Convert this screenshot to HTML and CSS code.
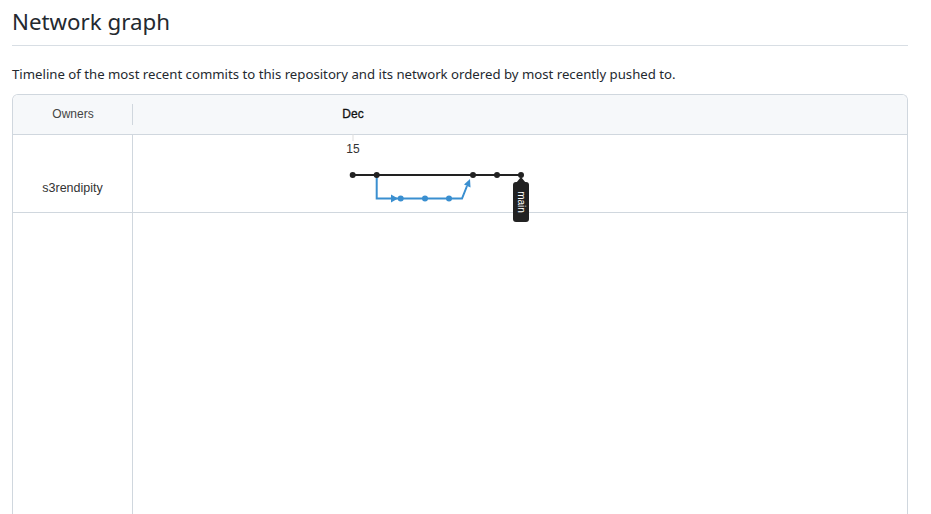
FILE: index.html
```html
<!DOCTYPE html>
<html>
<head>
<meta charset="utf-8">
<link rel="stylesheet" href="styles.css">
</head>
<body>
<div class="page">
  <h1 class="title">Network graph</h1>
  <p class="desc">Timeline of the most recent commits to this repository and its network ordered by most recently pushed to.</p>
  <div class="network">
    <div class="owners">
      <div class="owners-head"><span class="owners-label">Owners</span></div>
      <div class="owner-row">s3rendipity</div>
      <div class="owner-rest"></div>
    </div>
    <div class="graph">
      <div class="graph-head"></div>
      <div class="graph-row"></div>
      <svg class="graph-svg" width="774" height="420" viewBox="0 0 774 420" xmlns="http://www.w3.org/2000/svg">
        <line x1="220" y1="39" x2="220" y2="46" stroke="#ddd" stroke-width="1"/>
        <text x="220" y="23" text-anchor="middle" class="month">Dec</text>
        <text x="220" y="58" text-anchor="middle" class="day">15</text>
        <line x1="219.7" y1="80" x2="388" y2="80" stroke="#222" stroke-width="2"/>
        <path d="M243.7 80 V103.5 H260" fill="none" stroke="#3a8fd0" stroke-width="2"/>
        <path d="M258 99.5 L265 103.5 L258 107.5 Z" fill="#3a8fd0"/>
        <path d="M262 103.5 H329 L334 91" fill="none" stroke="#3a8fd0" stroke-width="2"/>
        <path d="M337 84 L337.5 92.5 L331 89.5 Z" fill="#3a8fd0"/>
        <circle cx="267.7" cy="103.5" r="3" fill="#3a8fd0"/>
        <circle cx="292" cy="103.5" r="3" fill="#3a8fd0"/>
        <circle cx="316" cy="103.5" r="3" fill="#3a8fd0"/>
        <circle cx="219.7" cy="80" r="3" fill="#222"/>
        <circle cx="243.7" cy="80" r="3" fill="#222"/>
        <circle cx="340" cy="80" r="3" fill="#222"/>
        <circle cx="364" cy="80" r="3" fill="#222"/>
        <circle cx="388" cy="80" r="3" fill="#222"/>
        <path d="M388 82 L393 88 L383 88 Z" fill="#222"/>
        <rect x="380" y="87" width="16" height="40" rx="3" fill="#222"/>
        <text x="0" y="0" class="branch" transform="translate(388 107) rotate(90)" text-anchor="middle">main</text>
      </svg>
    </div>
  </div>
</div>
</body>
</html>
```

FILE: styles.css
```css
* { box-sizing: border-box; }
html, body { margin: 0; padding: 0; background: #fff; }
body {
  font-family: "Noto Sans", "Open Sans", sans-serif;
  color: #24292f;
}
.page {
  padding: 0 23px 0 12px;
  height: 514px;
  overflow: hidden;
  display: flex;
  flex-direction: column;
}
.title {
  margin: 0;
  padding: 6px 0 7px;
  font-size: 22.3px;
  font-weight: 400;
  line-height: 32px;
  border-bottom: 1px solid #d8dee4;
}
.desc {
  margin: 18px 0 0;
  font-size: 13.2px;
  line-height: 20px;
}
.network {
  margin-top: 10px;
  flex: 1;
  display: grid;
  grid-template-columns: 120px 1fr;
  border: 1px solid #d0d7de;
  border-bottom: none;
  border-radius: 6px 6px 0 0;
  overflow: hidden;
  font-family: "Liberation Sans", Arial, sans-serif;
  font-size: 12px;
  color: #333;
}
.owners { display: flex; flex-direction: column; }
.owners-head {
  height: 40px;
  background: #f6f8fa;
  border-bottom: 1px solid #d0d7de;
  display: flex;
  align-items: center;
  justify-content: center;
  position: relative;
}
.owners-head::after {
  content: "";
  position: absolute;
  right: 0;
  top: 9px;
  height: 21px;
  border-right: 1px solid #d0d7de;
}
.owners-label { color: #444; margin-top: -2px; }
.owner-row {
  height: 78px;
  border-bottom: 1px solid #d0d7de;
  border-right: 1px solid #d0d7de;
  display: flex;
  align-items: center;
  justify-content: center;
  padding-top: 29px;
  font-size: 12.5px;
  color: #333;
}
.owner-rest { flex: 1; border-right: 1px solid #d0d7de; }
.graph { position: relative; display: flex; flex-direction: column; }
.graph-head {
  height: 40px;
  background: #f6f8fa;
  border-bottom: 1px solid #d0d7de;
}
.graph-row {
  height: 78px;
  border-bottom: 1px solid #d0d7de;
}
.graph-svg {
  position: absolute;
  left: 0;
  top: 0;
}
.month { font-family: "Liberation Sans", Arial, sans-serif; font-size: 12px; font-weight: 400; fill: #111; stroke: #111; stroke-width: 0.3; }
.day { font-family: "Liberation Sans", Arial, sans-serif; font-size: 12px; fill: #333; }
.branch { font-family: "Liberation Sans", Arial, sans-serif; font-size: 10px; fill: #fff; dominant-baseline: central; }
```
